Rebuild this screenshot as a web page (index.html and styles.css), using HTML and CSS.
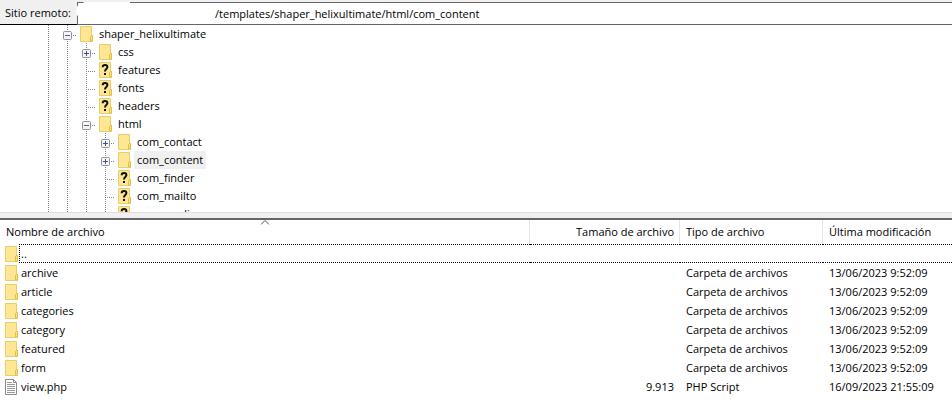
FILE: index.html
```html
<!DOCTYPE html>
<html lang="es">
<head>
    <meta charset="UTF-8">
    <meta name="viewport" content="width=device-width, initial-scale=1.0">
    <title>Sitio remoto</title>
    <link rel="stylesheet" href="styles.css">
</head>
<body>
    <!-- Shared icons -->
    <svg class="sprite" aria-hidden="true">
        <symbol id="icon-folder" viewBox="0 0 16 16">
            <path d="M2.5 .5h11v9h1v6h-12z" fill="#ffe693" stroke="#e8cd6c"/>
            <path d="M12.5 15V10.5l1-1h1V15z" fill="#ffe07a" stroke="#e3bd45"/>
        </symbol>
        <symbol id="icon-unknown" viewBox="0 0 16 16">
            <use href="#icon-folder"/>
            <path d="M5.7 5.2C5.7 3.6 6.6 3 8 3s2.4.8 2.4 2.1C10.4 7 8 7 8 9.4" fill="none" stroke="#111" stroke-width="2"/>
            <path d="M7 11h2v2H7z" fill="#111"/>
        </symbol>
        <symbol id="icon-file" viewBox="0 0 16 16">
            <path d="M2.5 .5h8l3 3v12h-11z" fill="#fff" stroke="#8c8c8c"/>
            <path d="M10.5 .5v3h3" fill="none" stroke="#8c8c8c"/>
            <path d="M4 3.5h5M4 5.5h8M4 7.5h8M4 9.5h8M4 11.5h8M4 13.5h8" stroke="#9a9a9a"/>
        </symbol>
        <symbol id="icon-minus" viewBox="0 0 9 9">
            <rect x=".5" y=".5" width="8" height="8" rx="1" fill="#f5f5f5" stroke="#919191"/>
            <path d="M2 4.5h5" stroke="#4b5f9c"/>
        </symbol>
        <symbol id="icon-plus" viewBox="0 0 9 9">
            <rect x=".5" y=".5" width="8" height="8" rx="1" fill="#f5f5f5" stroke="#919191"/>
            <path d="M2 4.5h5M4.5 2v5" stroke="#3a4f94"/>
        </symbol>
    </svg>

    <div class="address-bar">
        <label for="remotePath">Sitio remoto:</label>
        <div class="path-field">
            <input type="text" id="remotePath" value="/templates/shaper_helixultimate/html/com_content">
            <svg class="mask" viewBox="0 0 56 22" aria-hidden="true"><path d="M2 3Q6 3 8 0H54V14H8Q4 18 1 13Q-1 8 2 3z" fill="#fff"/></svg>
        </div>
    </div>

    <ul class="tree">
        <li class="node">
            <span class="guide"></span>
            <span class="guide branch"><button class="toggle" aria-label="Contraer"><svg><use href="#icon-minus"/></svg></button></span>
            <svg class="icon"><use href="#icon-folder"/></svg>
            <span class="name">shaper_helixultimate</span>
        </li>
        <li class="node">
            <span class="guide"></span><span class="guide"></span>
            <span class="guide branch"><button class="toggle" aria-label="Expandir"><svg><use href="#icon-plus"/></svg></button></span>
            <svg class="icon"><use href="#icon-folder"/></svg>
            <span class="name">css</span>
        </li>
        <li class="node">
            <span class="guide"></span><span class="guide"></span>
            <span class="guide branch"></span>
            <svg class="icon"><use href="#icon-unknown"/></svg>
            <span class="name">features</span>
        </li>
        <li class="node">
            <span class="guide"></span><span class="guide"></span>
            <span class="guide branch"></span>
            <svg class="icon"><use href="#icon-unknown"/></svg>
            <span class="name">fonts</span>
        </li>
        <li class="node">
            <span class="guide"></span><span class="guide"></span>
            <span class="guide branch"></span>
            <svg class="icon"><use href="#icon-unknown"/></svg>
            <span class="name">headers</span>
        </li>
        <li class="node">
            <span class="guide"></span><span class="guide"></span>
            <span class="guide branch"><button class="toggle" aria-label="Contraer"><svg><use href="#icon-minus"/></svg></button></span>
            <svg class="icon"><use href="#icon-folder"/></svg>
            <span class="name">html</span>
        </li>
        <li class="node">
            <span class="guide"></span><span class="guide"></span><span class="guide"></span>
            <span class="guide branch"><button class="toggle" aria-label="Expandir"><svg><use href="#icon-plus"/></svg></button></span>
            <svg class="icon"><use href="#icon-folder"/></svg>
            <span class="name">com_contact</span>
        </li>
        <li class="node">
            <span class="guide"></span><span class="guide"></span><span class="guide"></span>
            <span class="guide branch"><button class="toggle" aria-label="Expandir"><svg><use href="#icon-plus"/></svg></button></span>
            <svg class="icon"><use href="#icon-folder"/></svg>
            <span class="name selected">com_content</span>
        </li>
        <li class="node">
            <span class="guide"></span><span class="guide"></span><span class="guide"></span>
            <span class="guide branch"></span>
            <svg class="icon"><use href="#icon-unknown"/></svg>
            <span class="name">com_finder</span>
        </li>
        <li class="node">
            <span class="guide"></span><span class="guide"></span><span class="guide"></span>
            <span class="guide branch"></span>
            <svg class="icon"><use href="#icon-unknown"/></svg>
            <span class="name">com_mailto</span>
        </li>
        <li class="node">
            <span class="guide"></span><span class="guide"></span><span class="guide"></span>
            <span class="guide branch"></span>
            <svg class="icon"><use href="#icon-unknown"/></svg>
            <span class="name">com_media</span>
        </li>
    </ul>

    <div class="splitter"></div>

    <table class="files">
        <colgroup>
            <col class="col-name">
            <col class="col-size">
            <col class="col-type">
            <col>
        </colgroup>
        <thead>
            <tr>
                <th class="sorted">Nombre de archivo
                    <svg class="sort-arrow" viewBox="0 0 9 5"><path d="M.5 4.5l4-4 4 4" fill="none" stroke="#555"/></svg>
                </th>
                <th class="size">Tamaño de archivo</th>
                <th>Tipo de archivo</th>
                <th>Última modificación</th>
            </tr>
        </thead>
        <tbody>
            <tr class="focused">
                <td><div class="entry"><svg class="icon"><use href="#icon-folder"/></svg><span class="label">..</span></div></td>
                <td class="size"></td>
                <td></td>
                <td></td>
            </tr>
            <tr>
                <td><div class="entry"><svg class="icon"><use href="#icon-folder"/></svg><span class="label">archive</span></div></td>
                <td class="size"></td>
                <td>Carpeta de archivos</td>
                <td>13/06/2023 9:52:09</td>
            </tr>
            <tr>
                <td><div class="entry"><svg class="icon"><use href="#icon-folder"/></svg><span class="label">article</span></div></td>
                <td class="size"></td>
                <td>Carpeta de archivos</td>
                <td>13/06/2023 9:52:09</td>
            </tr>
            <tr>
                <td><div class="entry"><svg class="icon"><use href="#icon-folder"/></svg><span class="label">categories</span></div></td>
                <td class="size"></td>
                <td>Carpeta de archivos</td>
                <td>13/06/2023 9:52:09</td>
            </tr>
            <tr>
                <td><div class="entry"><svg class="icon"><use href="#icon-folder"/></svg><span class="label">category</span></div></td>
                <td class="size"></td>
                <td>Carpeta de archivos</td>
                <td>13/06/2023 9:52:09</td>
            </tr>
            <tr>
                <td><div class="entry"><svg class="icon"><use href="#icon-folder"/></svg><span class="label">featured</span></div></td>
                <td class="size"></td>
                <td>Carpeta de archivos</td>
                <td>13/06/2023 9:52:09</td>
            </tr>
            <tr>
                <td><div class="entry"><svg class="icon"><use href="#icon-folder"/></svg><span class="label">form</span></div></td>
                <td class="size"></td>
                <td>Carpeta de archivos</td>
                <td>13/06/2023 9:52:09</td>
            </tr>
            <tr>
                <td><div class="entry"><svg class="icon"><use href="#icon-file"/></svg><span class="label">view.php</span></div></td>
                <td class="size">9.913</td>
                <td>PHP Script</td>
                <td>16/09/2023 21:55:09</td>
            </tr>
        </tbody>
    </table>
</body>
</html>
```
FILE: styles.css
```css
* {
    margin: 0;
    padding: 0;
    box-sizing: border-box;
}

body {
    font-family: "Open Sans", "Noto Sans", sans-serif;
    font-size: 11px;
    line-height: 18px;
    color: #000;
    background: #fff;
}

.sprite {
    display: none;
}

.icon {
    width: 16px;
    height: 16px;
    flex: none;
}

/* Address bar */
.address-bar {
    display: flex;
    height: 25px;
    padding-top: 2px;
    background: #f0f0f0;
}

.address-bar label {
    width: 77px;
    padding: 2px 0 0 5px;
    border-bottom: 1px solid #000;
    white-space: nowrap;
}

.path-field {
    position: relative;
    flex: 1;
}

.path-field input {
    width: 100%;
    height: 23px;
    padding: 0 4px 0 137px;
    border: 1px solid #666;
    border-right: none;
    background: #fff;
    color: #000;
    font: inherit;
    outline: none;
}

.mask {
    position: absolute;
    top: 0;
    left: -1px;
    width: 56px;
    height: 22px;
}

/* Directory tree */
.tree {
    height: 187px;
    padding-left: 39px;
    overflow: hidden;
    list-style: none;
}

.node {
    display: flex;
    align-items: center;
    height: 18px;
}

.guide {
    display: flex;
    align-items: center;
    justify-content: center;
    width: 19px;
    height: 18px;
    background: repeating-linear-gradient(#808080 0 1px, transparent 1px 2px) 9px 0 / 1px 100% no-repeat;
}

.branch {
    background:
        repeating-linear-gradient(#808080 0 1px, transparent 1px 2px) 9px 0 / 1px 100% no-repeat,
        repeating-linear-gradient(90deg, #808080 0 1px, transparent 1px 2px) 9px 10px / 10px 1px no-repeat;
}

.toggle {
    width: 9px;
    height: 9px;
    margin-top: 3px;
    border: none;
    background: none;
}

.toggle svg {
    display: block;
    width: 9px;
    height: 9px;
}

.node .icon {
    margin: 0 2px 0 1px;
}

.name {
    padding: 0 3px;
}

.selected {
    background: #f0f0f0;
}

/* Splitter between panes */
.splitter {
    height: 8px;
    background: #f0f0f0;
    border-top: 1px solid #e0e0e0;
    border-bottom: 2px solid #666;
}

/* File list */
.files {
    width: 100%;
    table-layout: fixed;
    border-spacing: 0;
}

.col-name {
    width: 530px;
}

.col-size {
    width: 150px;
}

.col-type {
    width: 143px;
}

.files th {
    position: relative;
    height: 24px;
    padding: 0 5px 0 6px;
    border-right: 1px solid #e5e5e5;
    font-weight: normal;
    text-align: left;
    white-space: nowrap;
}

.files th:last-child {
    border-right: none;
}

.files td {
    height: 19px;
    padding: 0 6px;
    white-space: nowrap;
}

.files td:first-child {
    padding: 0;
}

.files .size {
    text-align: right;
}

.sort-arrow {
    position: absolute;
    top: 0;
    left: 50%;
    width: 9px;
    height: 5px;
    transform: translateX(-50%);
}

.entry {
    display: flex;
    align-items: center;
    height: 19px;
    padding-left: 3px;
}

.label {
    flex: 1;
    padding-left: 2px;
}

.focused td:not(:first-child) {
    border: 1px dotted #000;
    border-width: 1px 0;
}

.focused .label {
    height: 19px;
    padding-left: 1px;
    border: 1px dotted #000;
    border-right: none;
}
```
